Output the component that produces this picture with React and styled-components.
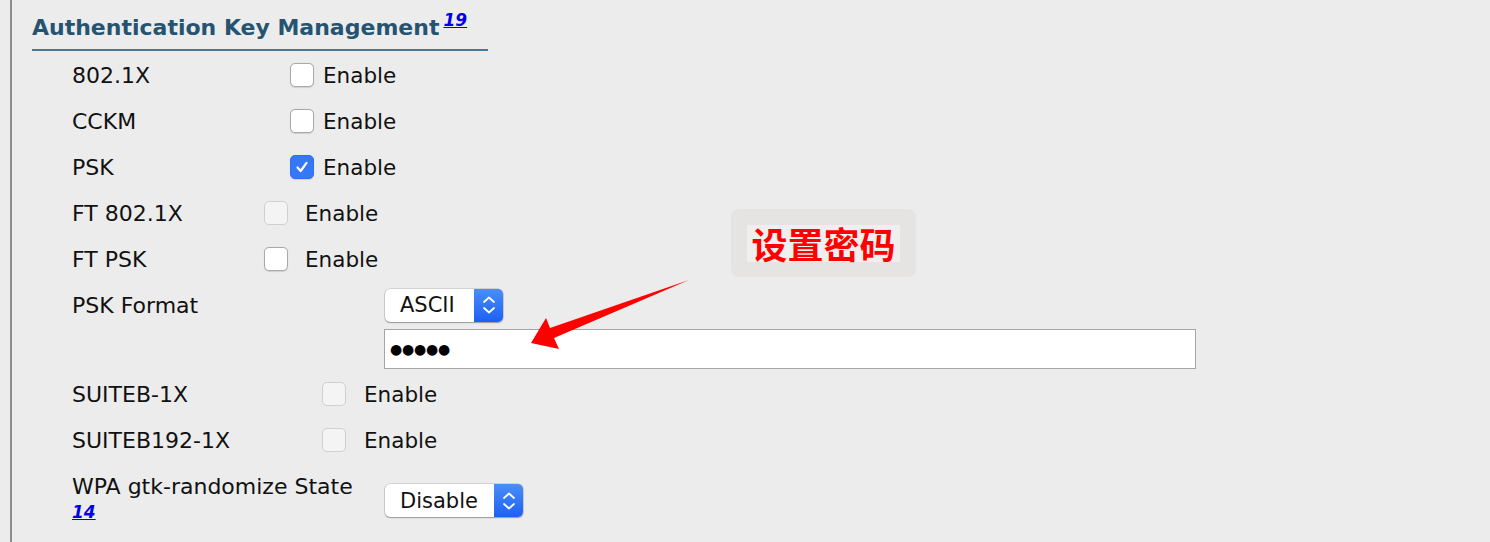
import React from "react";
import styled, { createGlobalStyle } from "styled-components";

const GlobalStyle = createGlobalStyle`
  html, body {
    margin: 0;
    padding: 0;
    background: #ececec;
  }
  body {
    font-family: "DejaVu Sans", Verdana, sans-serif;
    color: #111;
  }
`;

const Page = styled.div`
  position: relative;
  min-height: 100vh;
  padding-left: 10px;
  box-sizing: border-box;
`;

const Panel = styled.div`
  min-height: 100vh;
  border-left: 2px solid #8c8c8c;
  padding-left: 20px;
  box-sizing: border-box;
`;

const Heading = styled.h2`
  margin: 0;
  width: 456px;
  box-sizing: border-box;
  padding: 15px 0 8px;
  font-size: 22px;
  line-height: 26px;
  font-weight: bold;
  color: #265470;
  border-bottom: 2px solid #4a7894;
  white-space: nowrap;
`;

const FootLink = styled.a`
  color: #0000ee;
  font-size: 17px;
  font-weight: bold;
  font-style: italic;
  text-decoration: underline;
  line-height: 0;
  vertical-align: ${(p) => (p.$sup ? "9px" : "baseline")};
  margin-left: ${(p) => (p.$sup ? "4px" : "0")};
  cursor: pointer;
`;

const Rows = styled.div`
  padding-left: 40px;
  padding-top: 1px;
`;

const Row = styled.div`
  display: grid;
  grid-template-columns: ${(p) => p.$labelWidth}px auto;
  align-items: center;
  height: 46px;
  font-size: 22px;
`;

const TallRow = styled.div`
  display: grid;
  grid-template-columns: 313px auto;
  align-items: start;
  padding-top: 10px;
  font-size: 22px;
`;

const InputRow = styled.div`
  padding: 1px 0 2px 312px;
`;

const Label = styled.div`
  line-height: 24px;
  padding-top: 2px;
  white-space: nowrap;
`;

const Control = styled.div`
  display: flex;
  align-items: center;
  gap: ${(p) => p.$gap}px;
  font-size: 21.5px;
`;

const Box = styled.span`
  display: inline-flex;
  align-items: center;
  justify-content: center;
  width: 24px;
  height: 24px;
  box-sizing: border-box;
  border-radius: 5px;
  border: 1px solid ${(p) => (p.$checked ? "#2f6ff0" : p.$disabled ? "#cfcfcf" : "#a9a9a9")};
  background: ${(p) => (p.$checked ? "#3478f6" : p.$disabled ? "#f4f4f4" : "#fff")};
  box-shadow: ${(p) => (p.$disabled ? "none" : "0 0.5px 1px rgba(0,0,0,0.12)")};
`;

const SelectBox = styled.div`
  display: flex;
  align-items: stretch;
  width: ${(p) => p.$width}px;
  height: 33px;
  margin-top: ${(p) => p.$top || 0}px;
  border-radius: 5px;
  background: #fff;
  box-shadow: 0 0 0 0.5px rgba(0, 0, 0, 0.22), 0 1px 1.5px rgba(0, 0, 0, 0.28);
  overflow: hidden;
  font-size: 21px;
`;

const SelectText = styled.span`
  flex: 1;
  display: flex;
  align-items: center;
  padding-left: 15px;
`;

const SelectArrow = styled.span`
  width: 29px;
  display: flex;
  align-items: center;
  justify-content: center;
  background: linear-gradient(#4a8ef8, #1c60f4);
`;

const PasswordField = styled.div`
  width: 812px;
  height: 40px;
  box-sizing: border-box;
  border: 1.5px solid #a6a6a6;
  background: #fff;
  display: flex;
  align-items: center;
  padding-left: 5px;
  font-size: 14px;
  letter-spacing: -0.2px;
  color: #000;
`;

const Note = styled.div`
  position: absolute;
  left: 731px;
  top: 209px;
  width: 185px;
  height: 68px;
  border-radius: 8px;
  background: #e5e4e2;
  display: flex;
  align-items: center;
  justify-content: center;
`;

const NoteText = styled.span`
  background: #efefef;
  padding: 0 4px;
  color: #ff0000;
  font-family: "Noto Sans CJK SC", sans-serif;
  font-weight: bold;
  font-size: 36px;
  line-height: 37px;
`;

const Arrow = styled.svg`
  position: absolute;
  left: 0;
  top: 0;
  pointer-events: none;
`;

function Checkbox({ checked, disabled }) {
  return (
    <Box $checked={checked} $disabled={disabled}>
      {checked && (
        <svg width="16" height="16" viewBox="0 0 16 16">
          <path d="M3.5 8.5 L6.7 12 L12.5 3.8" fill="none" stroke="#fff" strokeWidth="2.2" strokeLinecap="round" strokeLinejoin="round" />
        </svg>
      )}
    </Box>
  );
}

function Select({ value, width, top }) {
  return (
    <SelectBox $width={width} $top={top}>
      <SelectText>{value}</SelectText>
      <SelectArrow>
        <svg width="14" height="20" viewBox="0 0 14 20">
          <path d="M2 7 L7 2.5 L12 7 M2 13 L7 17.5 L12 13" fill="none" stroke="#fff" strokeWidth="1.8" strokeLinecap="round" strokeLinejoin="round" />
        </svg>
      </SelectArrow>
    </SelectBox>
  );
}

const checks = [
  { label: "802.1X", col: 218, gap: 9 },
  { label: "CCKM", col: 218, gap: 9 },
  { label: "PSK", col: 218, gap: 9, checked: true },
  { label: "FT 802.1X", col: 192, gap: 17, disabled: true },
  { label: "FT PSK", col: 192, gap: 17 },
];

const suites = [
  { label: "SUITEB-1X", col: 250, gap: 18, disabled: true },
  { label: "SUITEB192-1X", col: 250, gap: 18, disabled: true },
];

function CheckRow({ label, col, gap, checked, disabled }) {
  return (
    <Row $labelWidth={col}>
      <Label>{label}</Label>
      <Control $gap={gap}>
        <Checkbox checked={checked} disabled={disabled} />
        <span>Enable</span>
      </Control>
    </Row>
  );
}

export default function App() {
  return (
    <Page>
      <GlobalStyle />
      <Panel>
        <Heading>
          Authentication Key Management
          <FootLink $sup>19</FootLink>
        </Heading>
        <Rows>
          {checks.map((c) => (
            <CheckRow key={c.label} {...c} />
          ))}
          <Row $labelWidth={313}>
            <Label>PSK Format</Label>
            <Select value="ASCII" width={118} />
          </Row>
          <InputRow>
            <PasswordField>●●●●●</PasswordField>
          </InputRow>
          {suites.map((c) => (
            <CheckRow key={c.label} {...c} />
          ))}
          <TallRow>
            <Label>
              WPA gtk-randomize State
              <br />
              <FootLink>14</FootLink>
            </Label>
            <Select value="Disable" width={138} top={11} />
          </TallRow>
        </Rows>
      </Panel>
      <Note>
        <NoteText>设置密码</NoteText>
      </Note>
      <Arrow width="1490" height="542">
        <polygon points="689,280 550,328 546,318 531,343 559,349 554,338" fill="#ff0000" />
      </Arrow>
    </Page>
  );
}
